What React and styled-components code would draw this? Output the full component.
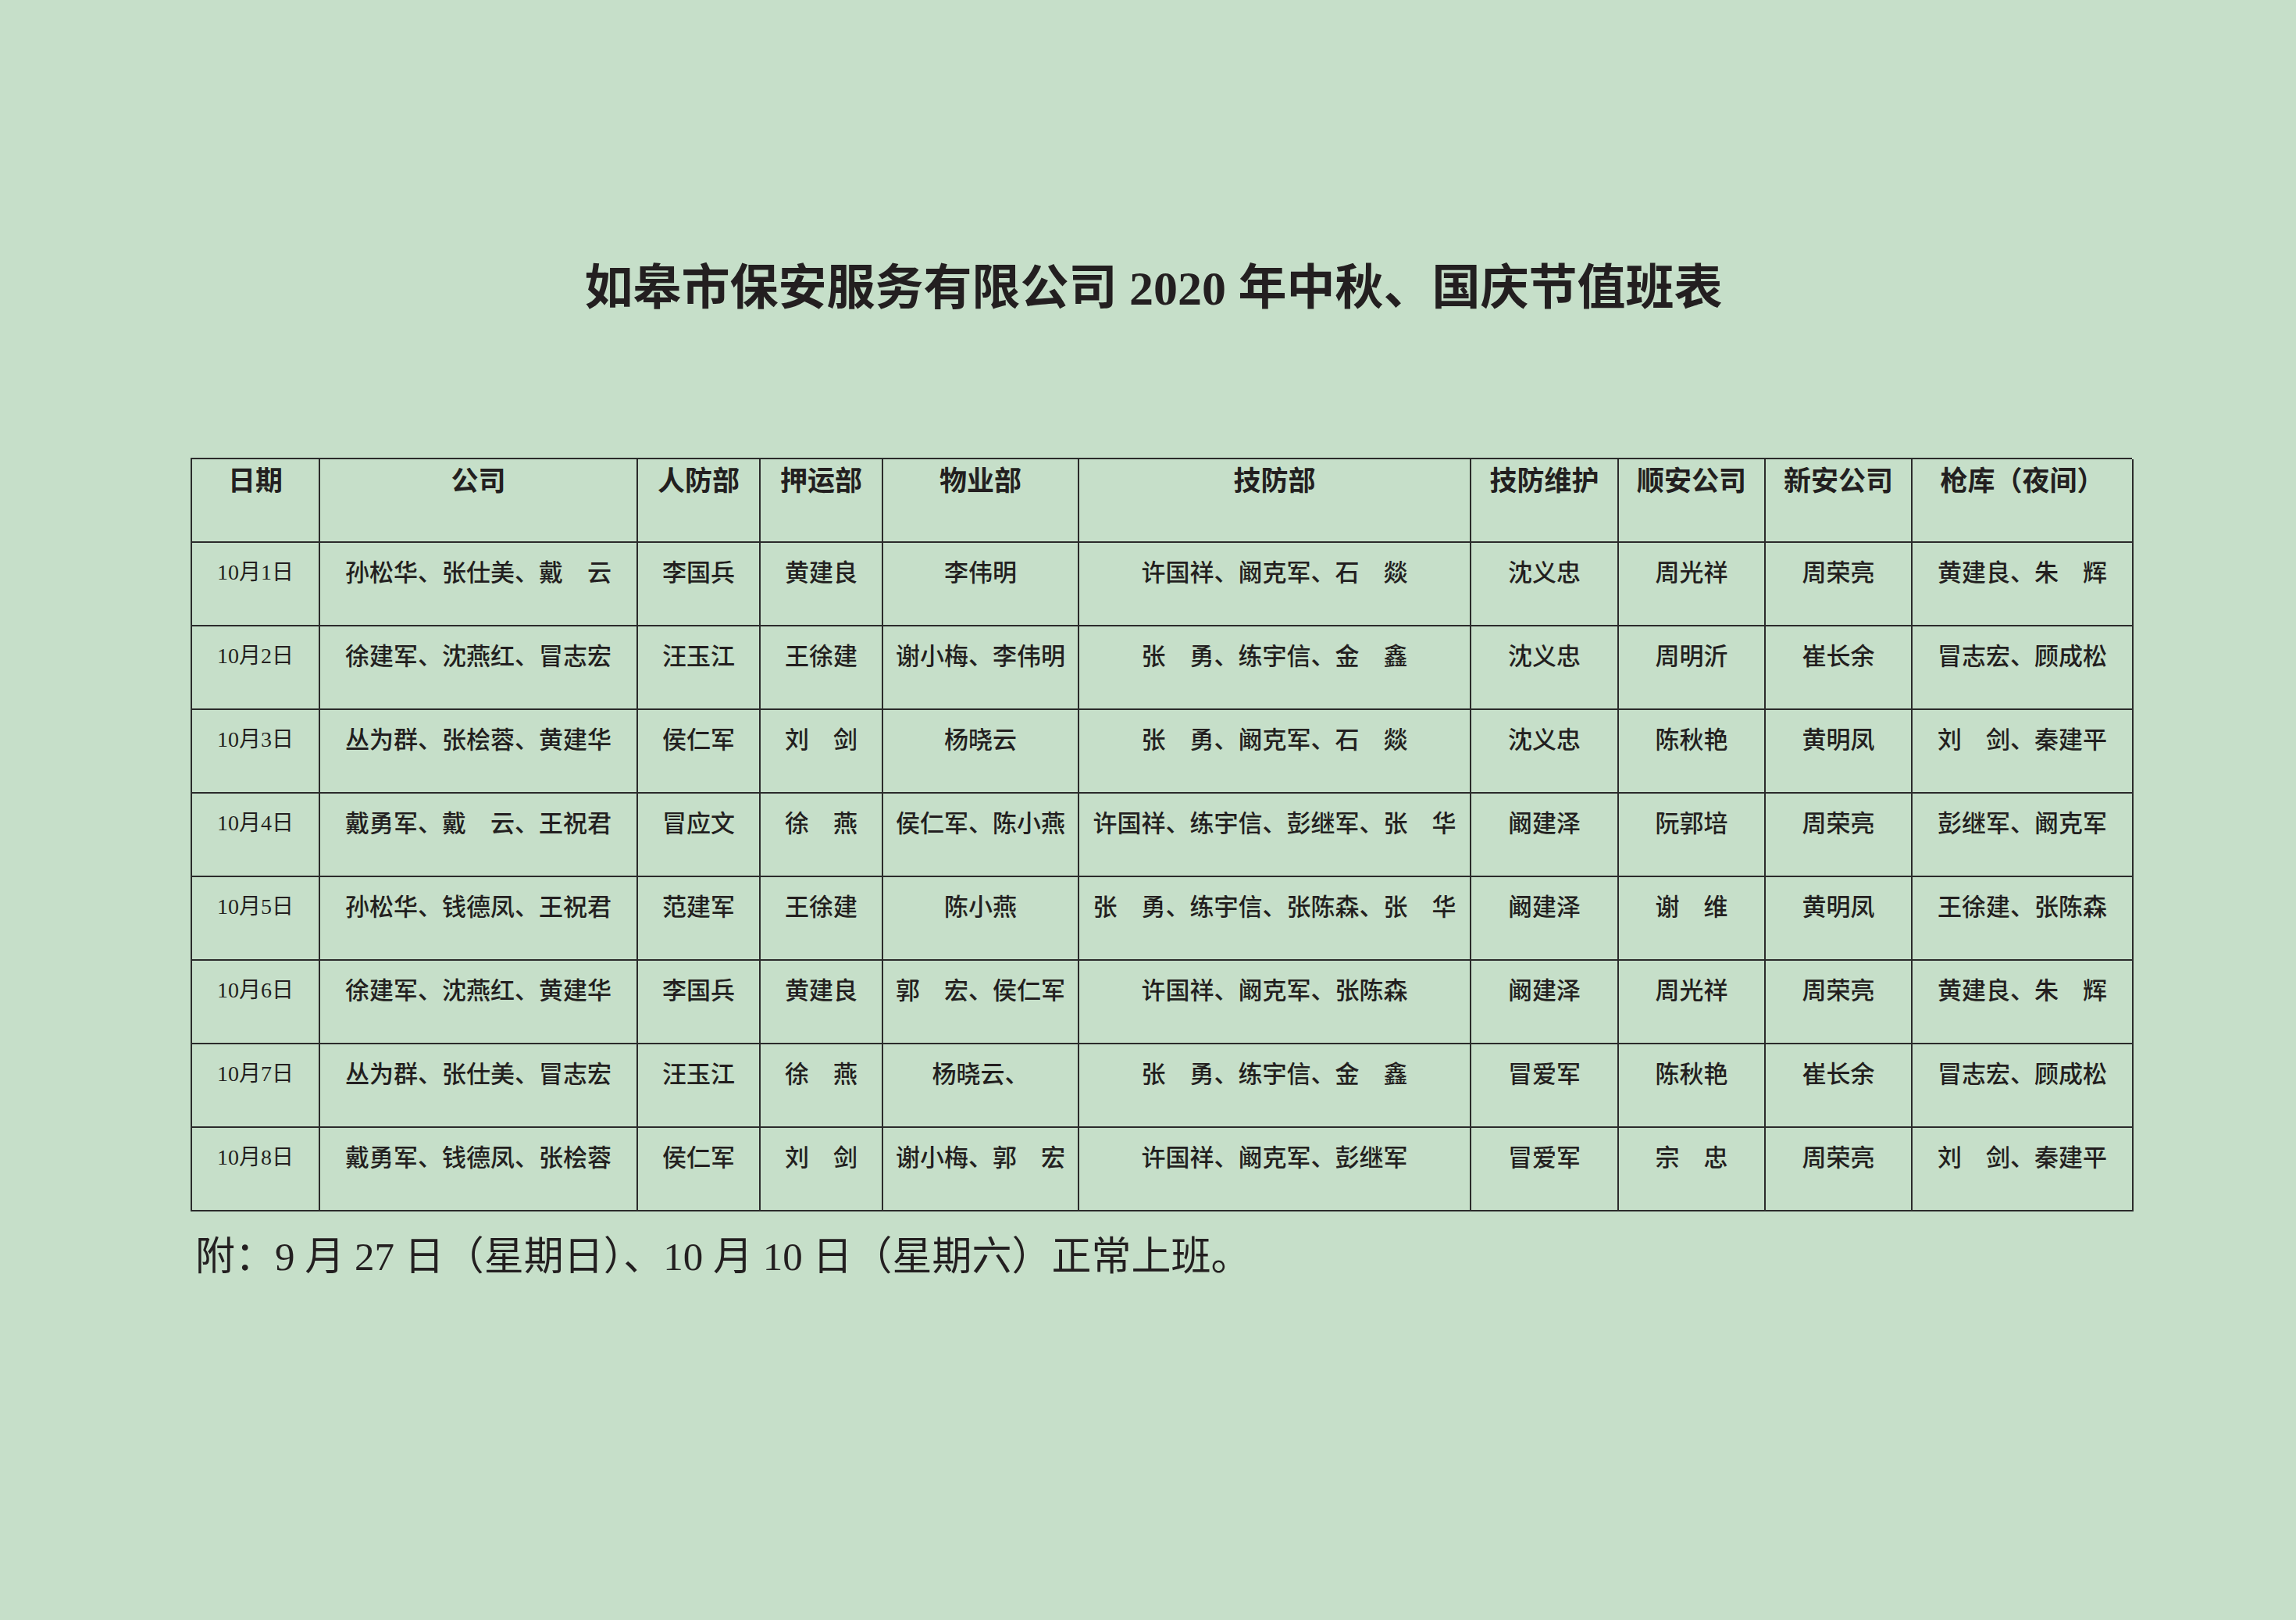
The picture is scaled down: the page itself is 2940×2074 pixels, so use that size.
import React from 'react';
import styled, { createGlobalStyle } from 'styled-components';

const GlobalStyle = createGlobalStyle`
  html, body { margin: 0; padding: 0; background: #c6dfc9; }
  * { box-sizing: border-box; }
`;

const INK = '#231f20';
const LINE = '#2b2b2b';
const MIXED = '"Liberation Serif", "Noto Sans CJK SC", serif';
const HEI = '"Noto Sans CJK SC", "Noto Sans", sans-serif';

const Page = styled.div`
  width: 2940px;
  min-height: 2074px;
  padding-top: 332px;
  background: #c6dfc9;
  color: ${INK};
`;

const Title = styled.h1`
  margin: 0 0 180px 0;
  font-family: ${MIXED};
  font-size: 62px;
  font-weight: 700;
  line-height: 1.2;
  text-align: center;
  padding-left: 14px;
`;

const Grid = styled.div`
  margin-left: 244px;
  width: 2486px;
  display: grid;
  grid-template-columns: 164px 407px 157px 157px 251px 502px 189px 188px 188px 283px;
  grid-auto-rows: 107px;
  border-top: 2px solid ${LINE};
  border-left: 2px solid ${LINE};
`;

const Cell = styled.div`
  border-right: 2px solid ${LINE};
  border-bottom: 2px solid ${LINE};
  text-align: center;
  white-space: nowrap;
  font-family: ${HEI};
  font-size: 31px;
  font-weight: 500;
  line-height: 1.2;
  padding-top: 17px;
`;

const HeadCell = styled(Cell)`
  font-size: 35px;
  font-weight: 700;
  padding-top: 4px;
`;

const DateCell = styled(Cell)`
  font-family: ${MIXED};
  font-size: 28px;
  font-weight: 400;
  padding-top: 21px;
`;

const Note = styled.p`
  margin: 28px 0 0 250px;
  font-family: ${MIXED};
  font-size: 51px;
  font-weight: 400;
  line-height: 1.2;
`;

const headers = ['日期', '公司', '人防部', '押运部', '物业部', '技防部', '技防维护', '顺安公司', '新安公司', '枪库（夜间）'];

const rows = [
  ['10月1日', '孙松华、张仕美、戴　云', '李国兵', '黄建良', '李伟明', '许国祥、阚克军、石　燚', '沈义忠', '周光祥', '周荣亮', '黄建良、朱　辉'],
  ['10月2日', '徐建军、沈燕红、冒志宏', '汪玉江', '王徐建', '谢小梅、李伟明', '张　勇、练宇信、金　鑫', '沈义忠', '周明沂', '崔长余', '冒志宏、顾成松'],
  ['10月3日', '丛为群、张桧蓉、黄建华', '侯仁军', '刘　剑', '杨晓云', '张　勇、阚克军、石　燚', '沈义忠', '陈秋艳', '黄明凤', '刘　剑、秦建平'],
  ['10月4日', '戴勇军、戴　云、王祝君', '冒应文', '徐　燕', '侯仁军、陈小燕', '许国祥、练宇信、彭继军、张　华', '阚建泽', '阮郭培', '周荣亮', '彭继军、阚克军'],
  ['10月5日', '孙松华、钱德凤、王祝君', '范建军', '王徐建', '陈小燕', '张　勇、练宇信、张陈森、张　华', '阚建泽', '谢　维', '黄明凤', '王徐建、张陈森'],
  ['10月6日', '徐建军、沈燕红、黄建华', '李国兵', '黄建良', '郭　宏、侯仁军', '许国祥、阚克军、张陈森', '阚建泽', '周光祥', '周荣亮', '黄建良、朱　辉'],
  ['10月7日', '丛为群、张仕美、冒志宏', '汪玉江', '徐　燕', '杨晓云、', '张　勇、练宇信、金　鑫', '冒爱军', '陈秋艳', '崔长余', '冒志宏、顾成松'],
  ['10月8日', '戴勇军、钱德凤、张桧蓉', '侯仁军', '刘　剑', '谢小梅、郭　宏', '许国祥、阚克军、彭继军', '冒爱军', '宗　忠', '周荣亮', '刘　剑、秦建平'],
];

export default function App() {
  return (
    <Page>
      <GlobalStyle />
      <Title>如皋市保安服务有限公司 2020 年中秋、国庆节值班表</Title>
      <Grid>
        {headers.map((h) => <HeadCell key={h}>{h}</HeadCell>)}
        {rows.map((r) => r.map((v, i) => (
          i === 0 ? <DateCell key={r[0]}>{v}</DateCell> : <Cell key={r[0] + i}>{v}</Cell>
        )))}
      </Grid>
      <Note>附：9 月 27 日（星期日）、10 月 10 日（星期六）正常上班。</Note>
    </Page>
  );
}
